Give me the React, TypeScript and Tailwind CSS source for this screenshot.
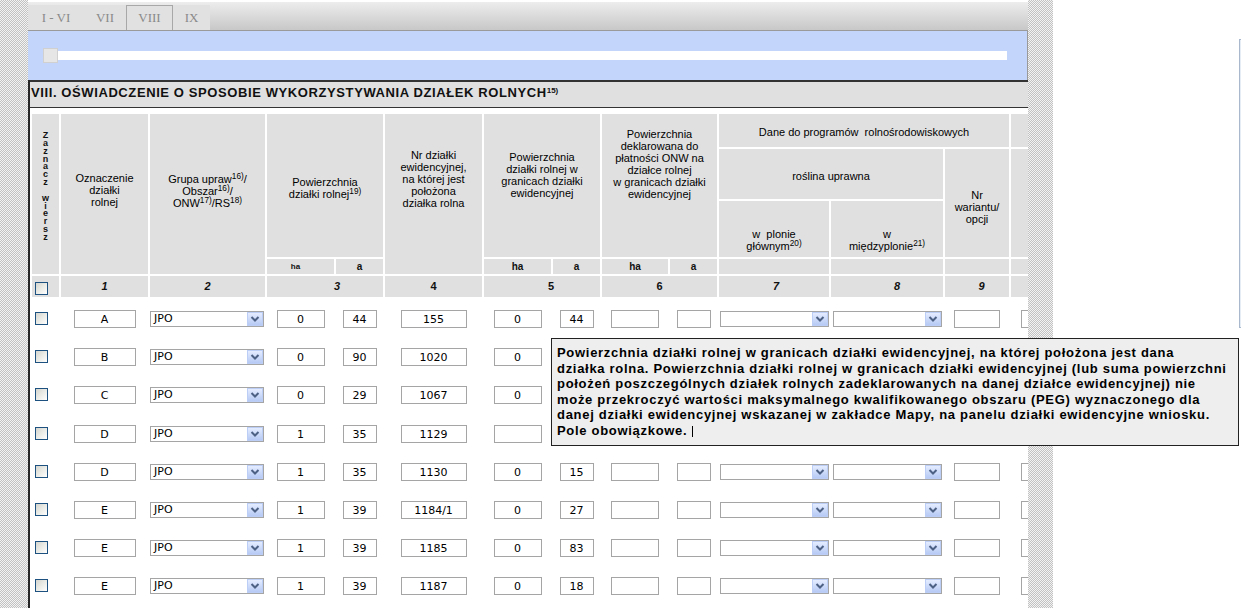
import React from 'react'

const sans = "font-['Liberation_Sans',Arial,sans-serif]"
const verdana = "font-['DejaVu_Sans',Verdana,sans-serif]"
const hatch = '[background-image:repeating-conic-gradient(#c2c2c2_0%_25%,#f3f3f3_0%_50%)] [background-size:2px_2px]'
const cols = 'grid grid-cols-[27px_87px_115px_67px_47px_97px_67px_47px_66px_47px_110px_112px_64px_60px] gap-[2px] w-max'

type Row = { z: string; ha: string; a: string; nr: string; ha2: string; a2: string }

const rows: Row[] = [
  { z: 'A', ha: '0', a: '44', nr: '155', ha2: '0', a2: '44' },
  { z: 'B', ha: '0', a: '90', nr: '1020', ha2: '0', a2: '' },
  { z: 'C', ha: '0', a: '29', nr: '1067', ha2: '0', a2: '' },
  { z: 'D', ha: '1', a: '35', nr: '1129', ha2: '', a2: '' },
  { z: 'D', ha: '1', a: '35', nr: '1130', ha2: '0', a2: '15' },
  { z: 'E', ha: '1', a: '39', nr: '1184/1', ha2: '0', a2: '27' },
  { z: 'E', ha: '1', a: '39', nr: '1185', ha2: '0', a2: '83' },
  { z: 'E', ha: '1', a: '39', nr: '1187', ha2: '0', a2: '18' },
]

const Checkbox = () => (
  <div className="w-[13px] h-[13px] border border-[#1c5180] bg-linear-to-br from-[#d6d6cf] to-white" />
)

const Input = ({ v = '', w }: { v?: string; w: string }) => (
  <input
    readOnly
    value={v}
    className={`${w} h-[18px] p-0 border border-[#a5a5a5] bg-white text-center text-[11px] text-black outline-none ${verdana}`}
  />
)

const Select = ({ v = '', w }: { v?: string; w: string }) => (
  <div className={`${w} h-[16px] border border-[#a5a5a5] bg-white flex`}>
    <span className={`flex-1 pl-[3px] text-[11px] leading-[14px] text-black ${verdana}`}>{v}</span>
    <span className="w-[16px] h-full border border-[#bccdf6] bg-linear-to-b from-[#e4ecff] to-[#b7caf4] flex items-center justify-center">
      <svg width="10" height="8" viewBox="0 0 10 8">
        <path d="M1.5 2 L5 5.5 L8.5 2" fill="none" stroke="#4d6185" strokeWidth="2" />
      </svg>
    </span>
  </div>
)

const H = ({ className = '', children }: { className?: string; children?: React.ReactNode }) => (
  <div className={`bg-[#e0e0e0] flex flex-col items-center text-center text-[11px] leading-[12px] text-black ${className}`}>
    {children}
  </div>
)

const Num = ({ className = '', children }: { className?: string; children?: React.ReactNode }) => (
  <div className={`bg-[#e0e0e0] flex items-center justify-center font-bold text-[#111] ${className}`}>
    {children}
  </div>
)

const Cell = ({ className = 'justify-center pt-[11px]', children }: { className?: string; children?: React.ReactNode }) => (
  <div className={`flex items-start ${className}`}>{children}</div>
)

const letters = ['Z', 'a', 'z', 'n', 'a', 'c', 'z', '\u00a0', 'w', 'i', 'e', 'r', 's', 'z']

const App = () => {
  return (
    <div className={`relative w-[1241px] h-[608px] overflow-hidden bg-white flex ${sans}`}>
      <div className={`w-[28px] h-full shrink-0 ${hatch}`} />

      <div className="w-[1000px] h-full shrink-0 flex flex-col overflow-hidden">
        {/* tabs */}
        <div className="h-[30px] shrink-0 border-t-2 border-white bg-linear-to-b from-[#ededed] to-[#c8c8c8] flex items-end">
          <div className="flex h-[25px] bg-[#e1e1e1] font-['Liberation_Serif','Times_New_Roman',serif] text-[13px] text-[#8a8a8a]">
            <div className="w-[56px] flex items-center justify-center">I - VI</div>
            <div className="w-[42px] flex items-center justify-center">VII</div>
            <div className="w-[47px] flex items-center justify-center border-t border-x border-[#a8a8a8]">VIII</div>
            <div className="w-[37px] flex items-center justify-center">IX</div>
          </div>
        </div>

        {/* slider band */}
        <div className="h-[50px] shrink-0 border-t border-r border-[#9a9a9a] bg-[#c4d5fb] pl-[15px] pt-[17px]">
          <div className="flex items-center">
            <div className="w-[15px] h-[15px] bg-[#e6e6e6] border border-[#d0d0d0]" />
            <div className="w-[949px] h-[9px] bg-white" />
          </div>
        </div>

        <div className="flex-1 border-l-2 border-[#262626]">
          <div className="h-[28px] border-t-2 border-b border-[#333] bg-[#e0e0e0] pl-[1px] pt-[3px] text-[13px] leading-[15px] font-bold tracking-[0.6px] text-[#111] whitespace-nowrap">
            VIII. OŚWIADCZENIE O SPOSOBIE WYKORZYSTYWANIA DZIAŁEK ROLNYCH<sup className="text-[8px] tracking-normal">15)</sup>
          </div>

          <div className="pl-[2px] pt-[6px]">
            {/* header */}
            <div className={`${cols} grid-rows-[33px_50px_56px_15px_21px]`}>
              <div className="col-start-1 row-start-1 row-span-4 bg-[#e0e0e0] flex flex-col items-center pt-[17px] text-[#111]">
                {letters.map((l, i) => (
                  <span key={i} className="block h-[7.85px] text-[9px] leading-[8px] font-bold">
                    {l}
                  </span>
                ))}
              </div>
              <H className="col-start-2 row-start-1 row-span-4 pt-[58px]">
                Oznaczenie<br />działki<br />rolnej
              </H>
              <H className="col-start-3 row-start-1 row-span-4 pt-[59px]">
                <span>Grupa upraw<sup>16)</sup>/</span>
                <span>Obszar<sup>16)</sup>/</span>
                <span>ONW<sup>17)</sup>/RS<sup>18)</sup></span>
              </H>
              <H className="col-start-4 col-span-2 row-start-1 row-span-3 pt-[62px]">
                Powierzchnia<br />
                <span>działki rolnej<sup>19)</sup></span>
              </H>
              <H className="col-start-6 row-start-1 row-span-4 pt-[35px]">
                Nr działki<br />ewidencyjnej,<br />na której jest<br />położona<br />działka rolna
              </H>
              <H className="col-start-7 col-span-2 row-start-1 row-span-3 pt-[37px]">
                Powierzchnia<br />działki rolnej w<br />granicach działki<br />ewidencyjnej
              </H>
              <H className="col-start-9 col-span-2 row-start-1 row-span-3 pt-[14px]">
                Powierzchnia<br />deklarowana do<br />płatności ONW na<br />działce rolnej<br />w granicach działki<br />ewidencyjnej
              </H>
              <H className="col-start-11 col-span-3 row-start-1 pt-[12px]">Dane do programów&nbsp; rolnośrodowiskowych</H>
              <H className="col-start-14 row-start-1" />
              <H className="col-start-11 col-span-2 row-start-2 pt-[21px]">roślina uprawna</H>
              <H className="col-start-13 row-start-2 row-span-2 pt-[40px]">
                Nr<br />wariantu/<br />opcji
              </H>
              <H className="col-start-14 row-start-2 row-span-2" />
              <H className="col-start-11 row-start-3 pt-[27px]">
                w&nbsp; plonie<br />
                <span>głównym<sup>20)</sup></span>
              </H>
              <H className="col-start-12 row-start-3 pt-[27px]">
                w<br />
                <span>międzyplonie<sup>21)</sup></span>
              </H>

              <Num className="col-start-4 row-start-4 text-[8px] pr-[10px]">ha</Num>
              <Num className="col-start-5 row-start-4 text-[10px]">a</Num>
              <Num className="col-start-7 row-start-4 text-[10px]">ha</Num>
              <Num className="col-start-8 row-start-4 text-[10px]">a</Num>
              <Num className="col-start-9 row-start-4 text-[10px]">ha</Num>
              <Num className="col-start-10 row-start-4 text-[10px]">a</Num>
              <Num className="col-start-11 row-start-4" />
              <Num className="col-start-12 row-start-4" />
              <Num className="col-start-13 row-start-4" />
              <Num className="col-start-14 row-start-4" />

              <div className="col-start-1 row-start-5 bg-[#e0e0e0] pl-[3px] pt-[6px]">
                <Checkbox />
              </div>
              <Num className="col-start-2 row-start-5 text-[11px] italic">1</Num>
              <Num className="col-start-3 row-start-5 text-[11px] italic">2</Num>
              <Num className="col-start-4 col-span-2 row-start-5 text-[11px] italic pl-[24px]">3</Num>
              <Num className="col-start-6 row-start-5 text-[11px]">4</Num>
              <Num className="col-start-7 col-span-2 row-start-5 text-[11px] pl-[18px]">5</Num>
              <Num className="col-start-9 col-span-2 row-start-5 text-[11px]">6</Num>
              <Num className="col-start-11 row-start-5 text-[11px] italic pl-[4px]">7</Num>
              <Num className="col-start-12 row-start-5 text-[11px] italic pl-[20px]">8</Num>
              <Num className="col-start-13 row-start-5 text-[11px] italic pl-[9px]">9</Num>
              <Num className="col-start-14 row-start-5" />
            </div>

            {/* data rows */}
            <div className={`${cols} grid-rows-[36px_36px_37px_36px_36px_36px_36px_36px] mt-[2px]`}>
              {rows.map((r, i) => (
                <React.Fragment key={i}>
                  <Cell className="justify-start pl-[3px] pt-[13px]">
                    <Checkbox />
                  </Cell>
                  <Cell><Input v={r.z} w="w-[62px]" /></Cell>
                  <Cell className="justify-start pt-[12px]"><Select v="JPO" w="w-[114px]" /></Cell>
                  <Cell><Input v={r.ha} w="w-[48px]" /></Cell>
                  <Cell><Input v={r.a} w="w-[34px]" /></Cell>
                  <Cell><Input v={r.nr} w="w-[66px]" /></Cell>
                  <Cell><Input v={r.ha2} w="w-[48px]" /></Cell>
                  <Cell><Input v={r.a2} w="w-[34px]" /></Cell>
                  <Cell><Input w="w-[48px]" /></Cell>
                  <Cell><Input w="w-[34px]" /></Cell>
                  <Cell className="justify-start pl-[1px] pt-[12px]"><Select w="w-[109px]" /></Cell>
                  <Cell className="justify-start pl-[2px] pt-[12px]"><Select w="w-[109px]" /></Cell>
                  <Cell><Input w="w-[46px]" /></Cell>
                  <Cell className="justify-start pl-[10px] pt-[11px]"><Input w="w-[46px]" /></Cell>
                </React.Fragment>
              ))}
            </div>
          </div>
        </div>
      </div>

      <div className={`w-[25px] h-full shrink-0 ${hatch}`} />

      <div className="flex-1 flex justify-end">
        <div className="mt-[39px] w-[2px] h-[289px] border-l border-y border-[#a9b8cc] bg-[#e6edf5]" />
      </div>

      {/* tooltip */}
      <div className="absolute left-[551px] top-[338px] w-[688px] h-[108px] border border-[#222] bg-[#eeeeee] pl-[5px] pt-[6px] text-[13px] leading-[15.6px] font-bold tracking-[0.7px] text-black whitespace-nowrap">
        Powierzchnia działki rolnej w granicach działki ewidencyjnej, na której położona jest dana<br />
        działka rolna. Powierzchnia działki rolnej w granicach działki ewidencyjnej (lub suma powierzchni<br />
        położeń poszczególnych działek rolnych zadeklarowanych na danej działce ewidencyjnej) nie<br />
        może przekroczyć wartości maksymalnego kwalifikowanego obszaru (PEG) wyznaczonego dla<br />
        danej działki ewidencyjnej wskazanej w zakładce Mapy, na panelu działki ewidencyjne wniosku.<br />
        Pole obowiązkowe. <span className="inline-block w-px h-[11px] bg-black align-[-2px]" />
      </div>
    </div>
  )
}

export default App
